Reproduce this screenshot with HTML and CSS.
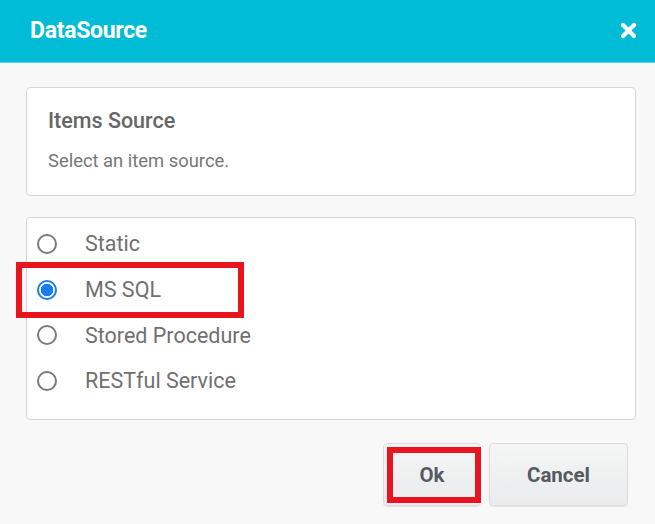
FILE: index.html
```html
<!DOCTYPE html>
<html lang="en">
<head>
<meta charset="utf-8">
<title>DataSource</title>
<link rel="stylesheet" href="styles.css">
</head>
<body>
<div class="dialog">
  <div class="header">
    <div class="title">DataSource</div>
    <svg class="close" width="17" height="17" viewBox="0 0 17 17" aria-label="Close">
      <path d="M3 3 L14 14 M14 3 L3 14" stroke="#fff" stroke-width="4.2" stroke-linecap="round"/>
    </svg>
  </div>
  <div class="content">
    <div class="card info">
      <div class="card-title">Items Source</div>
      <div class="card-text">Select an item source.</div>
    </div>
    <div class="card options">
      <label class="option"><span class="radio"></span><span class="label">Static</span></label>
      <label class="option marked"><span class="radio checked"></span><span class="label">MS SQL</span><span class="mark"></span></label>
      <label class="option"><span class="radio"></span><span class="label">Stored Procedure</span></label>
      <label class="option"><span class="radio"></span><span class="label">RESTful Service</span></label>
    </div>
    <div class="footer">
      <button class="btn ok">Ok<span class="mark-btn"></span></button>
      <button class="btn cancel">Cancel</button>
    </div>
  </div>
</div>
</body>
</html>
```
FILE: styles.css
```css
* { box-sizing: border-box; }
html, body { margin: 0; padding: 0; }
body {
  width: 655px;
  height: 524px;
  background: #f8f8f8;
  font-family: Roboto, "Liberation Sans", Arial, sans-serif;
  overflow: hidden;
}
.dialog { width: 655px; height: 524px; }
.header {
  height: 63px;
  background: #00bcd6;
  border-bottom: 1px solid #4fd3e6;
  display: flex;
  align-items: center;
  justify-content: space-between;
  padding: 0 18px 0 30px;
}
.title {
  color: #fff;
  font-size: 23px;
  font-weight: 700;
  letter-spacing: -0.3px;
  margin-top: -2px;
}
.close { display: block; margin-top: -2px; }
.content { padding: 24px 19px 0 26px; }
.card {
  background: #fff;
  border: 1px solid #d6d6d6;
  border-radius: 4px;
}
.info {
  height: 109px;
  padding: 20px 21px 0 21px;
}
.card-title {
  font-size: 21.5px;
  font-weight: 500;
  color: #666;
  line-height: 26px;
}
.card-text {
  margin-top: 16px;
  font-size: 18.4px;
  color: #777;
  line-height: 22px;
}
.options {
  margin-top: 21px;
  height: 203px;
  padding: 4px 0 0 10px;
}
.option {
  position: relative;
  display: flex;
  align-items: center;
  height: 45.7px;
}
.radio {
  width: 20px;
  height: 20px;
  border: 2px solid #7a7a7a;
  border-radius: 50%;
  background: #fff;
  flex: none;
  margin-top: -2px;
}
.radio.checked {
  border-color: #1a7cf4;
  background: radial-gradient(circle, #1a7cf4 0 6px, #fff 6.5px);
}
.label {
  margin-left: 28px;
  font-size: 21.5px;
  color: #707070;
  margin-top: -2px;
}
.mark {
  position: absolute;
  left: -21px;
  top: -6px;
  width: 228px;
  height: 56px;
  border: 6px solid #e8141f;
}
.footer {
  margin-top: 23px;
  display: flex;
  justify-content: flex-end;
  gap: 8px;
  padding-right: 8px;
}
.btn {
  position: relative;
  height: 63px;
  border: 1px solid #dcdcdc;
  border-radius: 4px;
  background: linear-gradient(#f4f5f5, #eaebec);
  box-shadow: 0 1px 1px rgba(0,0,0,0.08);
  font-family: Roboto, "Liberation Sans", Arial, sans-serif;
  font-size: 20.5px;
  font-weight: 700;
  color: #555b60;
  padding: 0;
}
.ok { width: 98px; }
.cancel { width: 139px; }
.mark-btn {
  position: absolute;
  left: 3px;
  top: 3px;
  right: -1px;
  bottom: 2px;
  border: 6px solid #e8141f;
}
```
